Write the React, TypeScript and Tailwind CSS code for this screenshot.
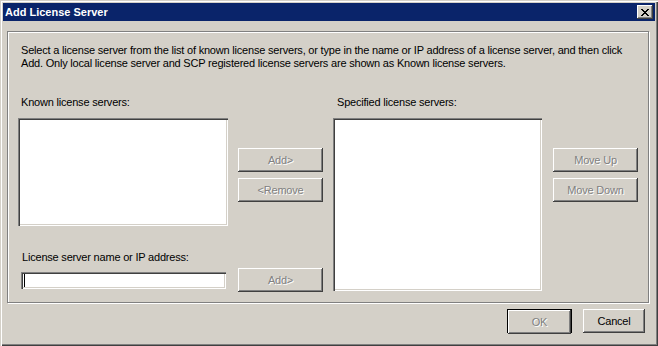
import React from "react";

const raised =
  "[box-shadow:inset_-1px_-1px_0_#404040,inset_1px_1px_0_#fff,inset_-2px_-2px_0_#808080,inset_2px_2px_0_#d4d0c8]";
const sunken =
  "[box-shadow:inset_1px_1px_0_#808080,inset_2px_2px_0_#404040,inset_-1px_-1px_0_#fff,inset_-2px_-2px_0_#d4d0c8]";
const disabledText = "text-[#808080] [text-shadow:1px_1px_0_#fff]";

function Btn({
  label,
  disabled,
  className = "",
}: {
  label: string;
  disabled?: boolean;
  className?: string;
}) {
  return (
    <div
      className={`h-[24px] bg-[#d4d0c8] flex items-center justify-center ${raised} ${
        disabled ? disabledText : "text-black"
      } ${className}`}
    >
      {label}
    </div>
  );
}

export default function App() {
  return (
    <div
      className="w-[658px] h-[346px] bg-[#d4d0c8] p-[3px] flex flex-col text-[11px] leading-[13px] tracking-[-0.2px] text-black [font-family:'Liberation_Sans',Arial,sans-serif] [box-shadow:inset_1px_1px_0_#d4d0c8,inset_2px_2px_0_#fff,inset_-1px_-1px_0_#404040,inset_-2px_-2px_0_#808080]"
    >
      {/* Title bar */}
      <div className="h-[18px] bg-[#0a246a] flex items-center justify-between pl-[2px] pr-[2px]">
        <span className="text-white font-bold text-[11px] tracking-normal">Add License Server</span>
        <div className={`w-[16px] h-[14px] bg-[#d4d0c8] flex items-center justify-center ${raised}`}>
          <svg width="8" height="7" viewBox="0 0 8 7" shapeRendering="crispEdges">
            <path
              d="M0 0h2v1h-2z M6 0h2v1h-2z M1 1h2v1h-2z M5 1h2v1h-2z M2 2h4v1h-4z M3 3h2v1h-2z M2 4h4v1h-4z M1 5h2v1h-2z M5 5h2v1h-2z M0 6h2v1h-2z M6 6h2v1h-2z"
              fill="#000"
            />
          </svg>
        </div>
      </div>

      {/* Group box */}
      <div className="mt-[10px] ml-[4px] w-[642px] h-[272px] border border-[#808080] [box-shadow:1px_1px_0_#fff,inset_1px_1px_0_#fff] pl-[10px] pt-[12px] flex flex-col">
        <p className="pl-[3px] whitespace-nowrap">
          Select a license server from the list of known license servers, or type in the name or IP address of a license server, and then click
          <br />
          Add. Only local license server and SCP registered license servers are shown as Known license servers.
        </p>

        <div className="mt-[26px] flex">
          {/* Column 1 */}
          <div className="w-[210px] flex flex-col">
            <div className="h-[22px] pl-[3px]">Known license servers:</div>
            <div className={`h-[108px] bg-white ${sunken}`} />
            <div className="mt-[25px] h-[13px] pl-[4px]">License server name or IP address:</div>
            <div className={`mt-[8px] ml-[3px] w-[205px] h-[17px] bg-white ${sunken} flex items-center pl-[3px]`}>
              <span className="w-[1px] h-[13px] bg-black" />
            </div>
          </div>

          {/* Column 2 */}
          <div className="ml-[10px] w-[85px] flex flex-col">
            <Btn label="Add>" disabled className="mt-[52px]" />
            <Btn label="<Remove" disabled className="mt-[6px]" />
            <Btn label="Add>" disabled className="mt-[66px]" />
          </div>

          {/* Column 3 */}
          <div className="ml-[10px] w-[209px] flex flex-col">
            <div className="h-[22px] pl-[4px]">Specified license servers:</div>
            <div className={`h-[173px] bg-white ${sunken}`} />
          </div>

          {/* Column 4 */}
          <div className="ml-[11px] w-[85px] flex flex-col">
            <Btn label="Move Up" disabled className="mt-[52px]" />
            <Btn label="Move Down" disabled className="mt-[6px]" />
          </div>
        </div>
      </div>

      {/* Bottom buttons */}
      <div className="mt-[6px] flex justify-end pr-[10px] gap-[11px]">
        <div className="w-[65px] h-[24px] border border-black">
          <Btn label="OK" disabled className="h-[22px]" />
        </div>
        <Btn label="Cancel" className="w-[62px]" />
      </div>
    </div>
  );
}
